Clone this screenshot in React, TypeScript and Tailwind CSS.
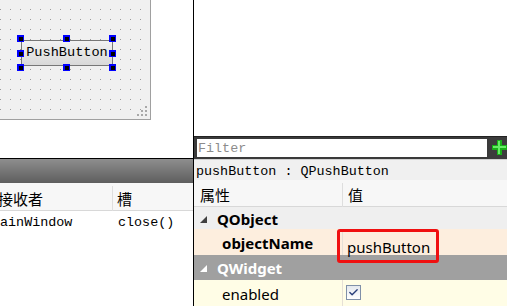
import { Check } from "lucide-react";

// Qt Designer fragment: form canvas, signal/slot editor, property editor.

const MONO = "font-['Liberation_Mono','DejaVu_Sans_Mono',monospace]";
const CJK = "font-['Noto_Sans_CJK_SC','Noto_Sans',sans-serif]";
const UI = "font-['Noto_Sans','Open_Sans',sans-serif]";

function Handle({ className }: { className: string }) {
  return (
    <span className={`absolute grid size-[7px] place-items-center bg-[#0000ff] ${className}`}>
      <span className="size-[4px] bg-black" />
    </span>
  );
}

function ExpandArrow({ color }: { color: string }) {
  return (
    <svg width="7" height="7" viewBox="0 0 7 7" className="shrink-0">
      <path d="M7 0 L7 7 L0 7 Z" fill={color} />
    </svg>
  );
}

function PlusIcon() {
  return (
    <svg width="15" height="15" viewBox="0 0 15 15" className="shrink-0">
      <rect x="5" y="0" width="5" height="15" fill="#18b018" />
      <rect x="0" y="5" width="15" height="5" fill="#18b018" />
      <rect x="6" y="1" width="2" height="13" fill="#66ee66" />
      <rect x="1" y="6" width="13" height="2" fill="#66ee66" />
    </svg>
  );
}

function FormCanvas() {
  return (
    <div className="relative h-[120px] w-[151px] border-b border-r border-[#a0a0a0] bg-[#f0f0f0] bg-[image:radial-gradient(circle_at_0.5px_0.5px,#9c9c9c_0.6px,transparent_0.7px)] bg-[size:10px_10px] bg-[position:0_9px]">
      <div className="absolute left-[21px] top-[40px] flex h-[26px] w-[92px] items-center justify-center border border-[#777] bg-[linear-gradient(#f2f2f2,#d9d9d9)]">
        <span className={`${MONO} text-[13.6px] leading-none text-black`}>PushButton</span>
      </div>
      <Handle className="left-[17px] top-[35px]" />
      <Handle className="left-[63px] top-[35px]" />
      <Handle className="left-[109px] top-[35px]" />
      <Handle className="left-[17px] top-[50px]" />
      <Handle className="left-[109px] top-[50px]" />
      <Handle className="left-[17px] top-[64px]" />
      <Handle className="left-[63px] top-[64px]" />
      <Handle className="left-[109px] top-[64px]" />
      <svg width="11" height="11" viewBox="0 0 11 11" className="absolute bottom-[2px] right-[2px]">
        {[
          [8, 0],
          [8, 4],
          [4, 4],
          [8, 8],
          [4, 8],
          [0, 8],
        ].map(([x, y]) => (
          <rect key={`${x}-${y}`} x={x} y={y} width="2" height="2" fill="#a8a8a8" />
        ))}
      </svg>
    </div>
  );
}

function SignalSlotPanel() {
  return (
    <div className="flex flex-1 flex-col">
      <div className="h-[38px] bg-white" />
      <div className="h-[25px] border-t border-black bg-[linear-gradient(#8e8e8e,#5e5e5e)]" />
      <div className={`${CJK} flex h-[28px] items-center border-b border-[#d8d8d8] bg-[#f7f7f7] pt-[3px] text-[15px] text-black`}>
        <div className="ml-[-2px] w-[115px] border-r border-[#dedede] leading-[25px]">接收者</div>
        <div className="pl-[4px] leading-[25px]">槽</div>
      </div>
      <div className={`${MONO} flex h-[22px] items-center bg-white pt-[2px] text-[13.4px] text-black`}>
        <div className="ml-[-8px] w-[126px]">MainWindow</div>
        <div>close()</div>
      </div>
      <div className="flex-1 bg-white" />
    </div>
  );
}

function PropertyRow({
  bg,
  name,
  value,
  bold,
}: {
  bg: string;
  name: string;
  value?: React.ReactNode;
  bold?: boolean;
}) {
  return (
    <div className={`flex h-[26px] ${bg}`}>
      <div className={`w-[149px] border-r border-[#e6e0d6] pl-[28px] pt-[2px] leading-[24px] text-[15px] text-black ${bold ? "font-bold" : ""}`}>
        {name}
      </div>
      <div className="relative flex-1">{value}</div>
    </div>
  );
}

function PropertyEditor() {
  return (
    <div className="flex flex-1 flex-col bg-white">
      <div className="h-[141px] bg-white" />
      <div className="flex h-[24px] items-center gap-[3px] border-t border-[#222] bg-[#3c3c3c] pl-[1px]">
        <div className={`${MONO} flex h-[22px] w-[294px] items-center border-2 border-[#3a3a3a] bg-white pl-[1px] pt-[2px] text-[13.4px] text-[#8c8c8c]`}>
          Filter
        </div>
        <PlusIcon />
      </div>
      <div className={`${MONO} flex h-[21px] items-center border-t border-[#d0d0d0] bg-[#f0f0f0] pl-[2px] pt-[4px] text-[13.4px] text-black`}>
        pushButton : QPushButton
      </div>
      <div className={`${CJK} flex h-[27px] items-center border-b border-[#d8d8d8] bg-[#f7f7f7] pt-[3px] text-[15px] text-black`}>
        <div className="w-[149px] border-r border-[#dedede] pl-[6px] leading-[24px]">属性</div>
        <div className="pl-[5px] leading-[24px]">值</div>
      </div>
      <div className={`${UI} flex h-[22px] items-center gap-[10px] bg-[#efefef] pl-[6px] pt-[2px] text-[15px] font-bold text-black`}>
        <ExpandArrow color="#404040" />
        <span>QObject</span>
      </div>
      <div className={UI}>
        <PropertyRow
          bg="bg-[#fdeede]"
          name="objectName"
          bold
          value={
            <div className="absolute left-[-6px] top-[0px] h-[34px] w-[102px] rounded-[3px] border-[3px] border-[#f01010] pl-[7px] pt-[4px] text-[15px] leading-[22px] text-black">
              pushButton
            </div>
          }
        />
        <div className="flex h-[25px] items-center gap-[10px] bg-[#a0a0a0] pl-[6px] pt-[2px] text-[15px] font-bold text-white">
          <ExpandArrow color="#ffffff" />
          <span>QWidget</span>
        </div>
        <PropertyRow
          bg="bg-[#fffde6]"
          name="enabled"
          value={
            <div className="absolute left-[3px] top-[5px] grid size-[15px] place-items-center border border-[#8090a8] bg-[linear-gradient(#e4e8ee,#ffffff)]">
              <Check size={11} strokeWidth={3} color="#2a3f7a" />
            </div>
          }
        />
      </div>
    </div>
  );
}

export default function App() {
  return (
    <div className="flex h-[306px] w-[507px] overflow-hidden bg-white">
      <div className="flex w-[194px] flex-col">
        <FormCanvas />
        <SignalSlotPanel />
      </div>
      <div className="w-[1px] bg-black" />
      <PropertyEditor />
    </div>
  );
}
